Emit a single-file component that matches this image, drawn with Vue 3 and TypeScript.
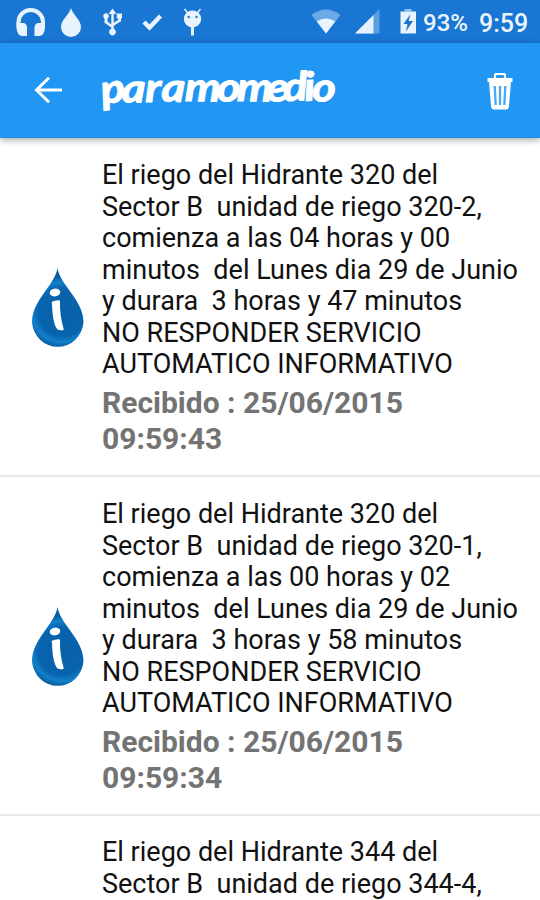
<script setup lang="ts">
interface Message {
  id: number
  body: string
  received: string
}

const messages: Message[] = [
  {
    id: 1,
    body: 'El riego del Hidrante 320 del\nSector B  unidad de riego 320-2,\ncomienza a las 04 horas y 00\nminutos  del Lunes dia 29 de Junio\ny durara  3 horas y 47 minutos\nNO RESPONDER SERVICIO\nAUTOMATICO INFORMATIVO',
    received: 'Recibido : 25/06/2015\n09:59:43',
  },
  {
    id: 2,
    body: 'El riego del Hidrante 320 del\nSector B  unidad de riego 320-1,\ncomienza a las 00 horas y 02\nminutos  del Lunes dia 29 de Junio\ny durara  3 horas y 58 minutos\nNO RESPONDER SERVICIO\nAUTOMATICO INFORMATIVO',
    received: 'Recibido : 25/06/2015\n09:59:34',
  },
  {
    id: 3,
    body: 'El riego del Hidrante 344 del\nSector B  unidad de riego 344-4,',
    received: '',
  },
]
</script>

<template>
  <div class="screen">
    <header class="status">
      <svg class="notifications" width="220" height="43" viewBox="0 0 220 43">
        <g fill="#e8f3fd">
          <path d="M18.500 27V22A12.200 12 0 0 1 43 22V27" fill="none" stroke="#e8f3fd" stroke-width="4" />
          <path d="M16.500 23H24Q27 24 27 28V36H22Q17 35 16.500 28ZM45 23H37.500Q34.500 24 34.500 28V36H39.500Q44.500 35 45 28Z" />
          <path d="M71 8C73 15 81 20 81 27A10 10 0 0 1 61 27C61 20 69 15 71 8Z" />
          <path d="M112.500 8.500L108.500 14H111.300V24.500L107.500 21.500V18.500A2.800 2.800 0 1 0 104.500 18.500V22.800L111.300 27.500V28.800A3.400 3.400 0 1 0 113.700 28.800V25.800L121 21.300V18.500H122V13.500H116.700V18.500H118.300V19.800L113.700 22.800V14H116.500Z" />
          <path d="M144 22L149.500 27.500L160.500 16" fill="none" stroke="#e8f3fd" stroke-width="4.400" />
          <path d="M184.500 9L188.500 14M200.500 9L196.500 14" stroke="#e8f3fd" stroke-width="1.500" />
          <ellipse cx="192.500" cy="19" rx="8.700" ry="8.500" />
          <rect x="191" y="26" width="3" height="9.500" />
        </g>
        <circle cx="188.700" cy="17" r="1.200" fill="#1976d2" />
        <circle cx="196.500" cy="17" r="1.200" fill="#1976d2" />
      </svg>
      <div class="system">
        <svg width="106" height="43" viewBox="310 0 106 43">
          <path d="M326 33.500L311.500 15Q326 4 340.500 15Z" fill="#6baae6" />
          <path d="M326 33.500L316.800 21.500Q326 15.500 335.200 21.500Z" fill="#eaf4fd" />
          <path d="M379.500 9V33.500H355Z" fill="#5b9fe0" />
          <path d="M373.500 15V33.500H355Z" fill="#e5f1fc" />
          <path d="M404.500 11.500V9H411.500V11.500Z" fill="#8fbfee" />
          <path d="M400.500 11.500H416V33.500H400.500Z" fill="#e8f3fd" />
          <path d="M410.500 14L403.500 24H407.500L406 31.500L413 21H408.700Z" fill="#1976d2" />
        </svg>
        <span class="battery">93%</span>
        <span class="clock">9:59</span>
      </div>
    </header>

    <nav class="toolbar">
      <svg class="back" width="28" height="28" viewBox="0 0 28 28" fill="none" stroke="#fff" stroke-width="3">
        <path d="M15 1.800L2.500 14L15 26.200M3 14H28" />
      </svg>
      <svg class="brand" width="240" height="80" viewBox="0 0 240 80">
        <text
          transform="scale(1.13 1)"
          x="2.500 19 40 54 75 103 121 147 162.500 181.500 187.500"
          y="54 52 52 51 51 51 51 51 51 51 51"
          rotate="-9 2 0 3 1 2 1 2 -2 -4 2"
        >paramomedio</text>
      </svg>
      <svg class="trash" width="28" height="38" viewBox="0 0 28 38">
        <path d="M9 6V2.500Q9 1 10.500 1H17.500Q19 1 19 2.500V6" fill="none" stroke="#fff" stroke-width="2.200" />
        <path d="M1.500 5H26.500V9H1.500Z" fill="#fff" />
        <path d="M3 9H25L22.900 34Q22.400 36.500 20 36.500H8Q5.600 36.500 5.100 34Z" fill="#fff" />
        <path d="M8.700 13L9.700 32M14 13V32M19.300 13L18.300 32" stroke="#4ba8f5" stroke-width="2.300" />
      </svg>
    </nav>

    <main class="list">
      <article v-for="message in messages" :key="message.id" class="item">
        <svg v-if="message.received" class="drop" width="54" height="84" viewBox="0 0 54 84">
          <defs>
            <radialGradient :id="`drop-${message.id}`" gradientUnits="userSpaceOnUse" cx="31" cy="45" r="35">
              <stop offset="0" stop-color="#0860a8" />
              <stop offset=".68" stop-color="#0863ae" />
              <stop offset=".86" stop-color="#1380cb" />
              <stop offset="1" stop-color="#075f9f" />
            </radialGradient>
          </defs>
          <path d="M26.500 1C29 18 52.500 33 52.500 55A25.800 26.500 0 0 1 1 55C1 33 24 18 26.500 1Z" :fill="`url(#drop-${message.id})`" />
          <ellipse cx="24" cy="25.500" rx="5.300" ry="3.900" fill="#fff" transform="rotate(-8 24 25.500)" />
          <path d="M20.500 35Q25 32.800 29 33.500Q28.500 48 32.800 62.500L31 63.500L26.500 62.500Q21.500 57 21 36.500Z" fill="#fff" />
        </svg>
        <span v-else class="drop-space"></span>
        <div class="content">
          <p class="body">{{ message.body }}</p>
          <p v-if="message.received" class="received">{{ message.received }}</p>
        </div>
      </article>
    </main>
  </div>
</template>

<style>
body {
  margin: 0;
  overflow: hidden;
}
</style>

<style scoped>
.screen {
  width: 540px;
  height: 900px;
  overflow: hidden;
  background: #fff;
  font-family: Roboto, "Liberation Sans", sans-serif;
}

.status {
  display: flex;
  justify-content: space-between;
  height: 43px;
  background: #1976d2;
  color: #eaf4fd;
}

.system {
  display: flex;
  width: 230px;
  align-items: center;
  font-size: 25px;
  font-weight: 500;
  line-height: 43px;
}

.system svg {
  flex: none;
}

.battery {
  width: 56px;
  margin-left: 7px;
  padding-top: 3px;
  font-size: 24px;
}

.clock {
  padding-top: 3px;
}

.toolbar {
  position: relative;
  display: flex;
  align-items: center;
  box-sizing: border-box;
  height: 95px;
  padding: 0 26px 0 34px;
  background: #2196f3;
  border-bottom: 1px solid #1c8de8;
  box-shadow: 0 2px 7px rgb(0 0 0 / 35%);
}

.brand {
  margin-left: 38px;
  overflow: visible;
}

.brand text {
  fill: #fff;
  stroke: #fff;
  stroke-width: 1px;
  font: italic 700 40px Lato, sans-serif;
}

.trash {
  margin-top: 3px;
  margin-left: auto;
}

.item {
  display: flex;
  align-items: center;
  box-sizing: border-box;
  height: 339px;
  padding: 24px 20px 20px 31px;
  border-bottom: 2px solid #e9e9e9;
}

.item:last-child {
  align-items: flex-start;
  padding-top: 21px;
}

.drop,
.drop-space {
  flex: none;
  width: 54px;
}

.content {
  margin-left: 17px;
}

.body,
.received {
  margin: 0;
  white-space: pre;
}

.body {
  color: #111;
  font-size: 27px;
  line-height: 31.6px;
}

.received {
  margin-top: 4px;
  color: #737373;
  font-size: 30px;
  font-weight: 700;
  line-height: 36px;
}
</style>
